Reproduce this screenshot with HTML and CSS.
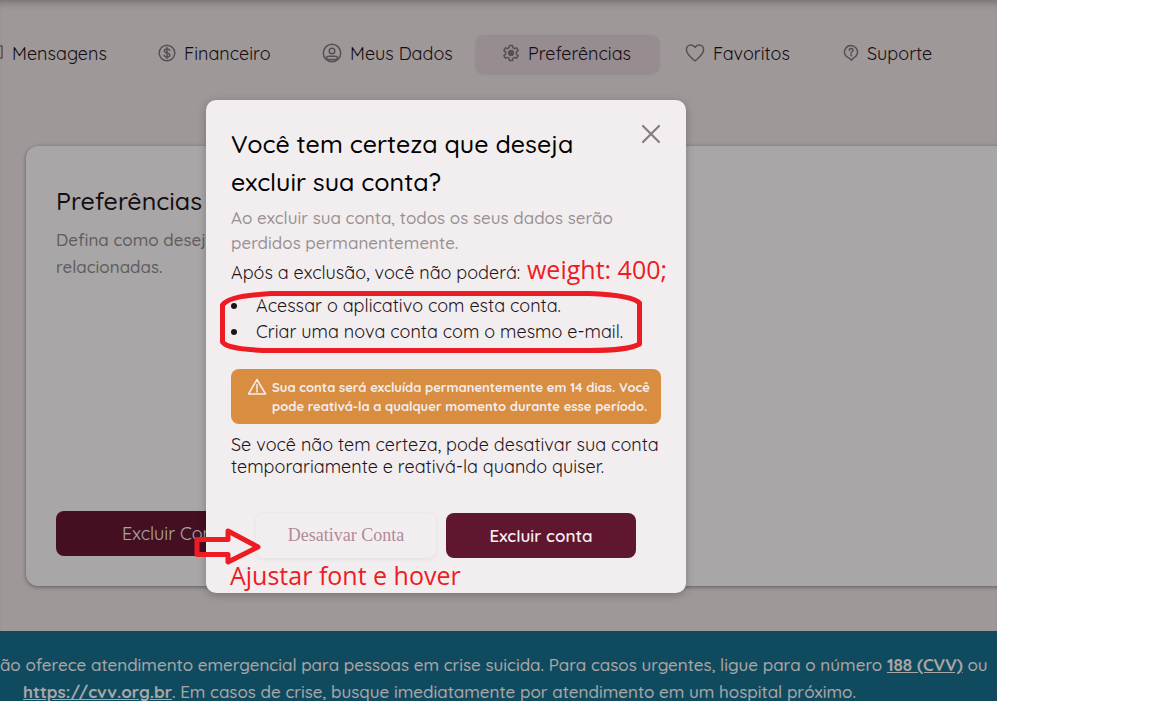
FILE: index.html
```
<!DOCTYPE html>
<html lang="pt-BR">

<head>
    <meta charset="UTF-8">
    <meta name="viewport" content="width=device-width, initial-scale=1.0">
    <title>Preferências</title>
    <link rel="stylesheet" href="styles.css">
</head>

<body>
    <div class="page">
        <nav class="menu">
            <a class="menu-item" href="#">
                <svg width="20" height="20" viewBox="0 0 20 20"><path d="M2 3h16v12H8l-4 3v-3H2z"/></svg>
                Mensagens
            </a>
            <a class="menu-item" href="#">
                <svg width="18" height="18" viewBox="0 0 18 18"><circle cx="9" cy="9" r="7.8"/><path d="M11.8 6.6C11.500 5.300 10.400 4.900 9 4.900c-1.600 0-2.700.7-2.700 1.900 0 2.900 5.600 1.400 5.600 4.300 0 1.300-1.200 2-2.900 2-1.600 0-2.700-.6-3-1.900M9 3.400v11.200"/></svg>
                Financeiro
            </a>
            <a class="menu-item" href="#">
                <svg width="20" height="20" viewBox="0 0 20 20"><circle cx="10" cy="10" r="8.700"/><circle cx="10" cy="8" r="2.800"/><path d="M4.500 16.500v-1c0-1.500 1-2.200 2.300-2.200h6.400c1.300 0 2.300.7 2.300 2.200v1M5 16.500h10"/></svg>
                Meus Dados
            </a>
            <a class="menu-item active" href="#">
                <svg width="18" height="18" viewBox="0 0 18 18"><path d="M7.500 1.500h3l.4 2.200 1.600.9 2.100-.8 1.500 2.600-1.700 1.500v2.200l1.700 1.500-1.500 2.600-2.100-.8-1.600.9-.4 2.200h-3l-.4-2.200-1.600-.9-2.100.8-1.500-2.600 1.700-1.500V7.900L1.900 6.400l1.500-2.600 2.100.8 1.600-.9z"/><circle class="fill" cx="9" cy="9" r="2.400"/></svg>
                Preferências
            </a>
            <a class="menu-item" href="#">
                <svg width="20" height="20" viewBox="0 0 20 20"><path d="M10 18C6 14.500 1.400 11 1.400 6.700 1.400 4 3.300 2 5.700 2 7.700 2 9.200 3 10 4.400 10.800 3 12.300 2 14.300 2c2.400 0 4.300 2 4.300 4.700C18.600 11 14 14.500 10 18z"/></svg>
                Favoritos
            </a>
            <a class="menu-item" href="#">
                <svg width="16" height="18" viewBox="0 0 16 18"><path d="M6.300 14.300A6.500 6.500 0 1 1 10 14.200L8.500 16.200z"/><path d="M6.200 6.300c0-1.100.8-1.800 1.900-1.800s1.900.7 1.900 1.700c0 1.300-1.900 1.400-1.900 2.900M8.100 10.500v1.200"/></svg>
                Suporte
            </a>
        </nav>

        <main class="card">
            <h1 class="card-title">Preferências</h1>
            <p class="card-text">Defina como deseja<br>relacionadas.</p>
            <button class="btn btn-card" type="button">Excluir Conta</button>
        </main>

        <footer class="footer">
            <p>não oferece atendimento emergencial para pessoas em crise suicida. Para casos urgentes, ligue para o número <a href="tel:188">188 (CVV)</a> ou<br><a href="https://cvv.org.br">https://cvv.org.br</a>. Em casos de crise, busque imediatamente por atendimento em um hospital próximo.</p>
        </footer>

        <!-- modal de exclusão -->
        <div class="overlay">
            <div class="modal" role="dialog" aria-modal="true" aria-labelledby="modal-title">
                <button class="close" type="button" aria-label="Fechar">
                    <svg width="20" height="20" viewBox="0 0 20 20"><path d="M2 2l16 16M18 2L2 18"/></svg>
                </button>
                <h2 class="modal-title" id="modal-title">Você tem certeza que deseja<br>excluir sua conta?</h2>
                <p class="modal-desc">Ao excluir sua conta, todos os seus dados serão<br>perdidos permanentemente.</p>
                <p class="modal-text">Após a exclusão, você não poderá:</p>
                <ul class="modal-list">
                    <li>Acessar o aplicativo com esta conta.</li>
                    <li>Criar uma nova conta com o mesmo e-mail.</li>
                </ul>
                <div class="alert">
                    <svg width="20" height="18" viewBox="0 0 20 18"><path d="M10 1.500L18.500 16H1.500zM10 6.500v4.500M10 12.300v1.700"/></svg>
                    <p>Sua conta será excluída permanentemente em 14 dias. Você<br>pode reativá-la a qualquer momento durante esse período.</p>
                </div>
                <p class="modal-hint">Se você não tem certeza, pode desativar sua conta<br>temporariamente e reativá-la quando quiser.</p>
                <div class="modal-actions">
                    <button class="btn btn-outline" type="button">Desativar Conta</button>
                    <button class="btn btn-primary" type="button">Excluir conta</button>
                </div>
            </div>
        </div>

        <!-- anotações -->
        <span class="note note-weight">weight: 400;</span>
        <span class="note note-hover">Ajustar font e hover</span>
        <svg class="mark mark-list" width="424" height="66" viewBox="0 0 424 66"><path d="M52 5.500H370C395 6.500 415 9 420.500 15V56C412 61 392 62.500 370 62.500H44C24 61.500 8 60 3.500 54V17C10 8.500 30 7 52 5.500z"/></svg>
        <svg class="mark mark-arrow" width="68" height="38" viewBox="0 0 68 38"><path d="M3 11.500H34V3L64 19 34 34V26.500H3z"/></svg>
    </div>
</body>

</html>
```
FILE: styles.css
```
* {
    margin: 0;
    padding: 0;
    box-sizing: border-box;
}

body {
    padding-right: 155px;
    background: #fff;
    font-family: Quicksand, Lato, sans-serif;
    font-size: 18px;
    color: #1e1319;
}

svg {
    flex: none;
    fill: none;
    stroke: currentColor;
    stroke-width: 1.5;
    stroke-linejoin: round;
    stroke-linecap: round;
}

.page {
    position: relative;
    display: flex;
    flex-direction: column;
    min-height: 100vh;
    overflow: hidden;
    background: #e4dadc;
    box-shadow: inset 0 8px 8px -6px rgba(0, 0, 0, .3);
}
/* menu */

.menu {
    display: grid;
    grid-template-columns: 148px 164px 180px 183px 158px 145px;
    margin: 35px 0 0 -16px;
}

.menu-item {
    display: flex;
    align-items: center;
    gap: 8px;
    height: 38px;
    padding-bottom: 2px;
    color: #1e1319;
    text-decoration: none;
    white-space: nowrap;
}

.menu-item svg {
    color: #7c7278;
}

.menu-item .fill {
    fill: currentColor;
}

.menu-item:nth-child(n+2) {
    padding-left: 26px;
}

.menu-item.active {
    border-radius: 8px;
    background: #d8c9cf;
    box-shadow: 0 1px 3px rgba(0, 0, 0, .12);
}
/* card */

.card {
    display: flex;
    flex-direction: column;
    align-items: flex-start;
    height: 440px;
    margin: 73px -20px 45px 26px;
    padding: 36px 30px 30px;
    border-radius: 12px;
    background: #f2eeef;
    box-shadow: 0 1px 4px rgba(0, 0, 0, .4);
}

.card-title {
    font-size: 25px;
    font-weight: 500;
    line-height: 38px;
}

.card-text {
    margin-top: 6px;
    font-size: 17px;
    font-weight: 500;
    line-height: 27px;
    color: #8c8488;
}

.btn {
    height: 45px;
    border: 0;
    border-radius: 8px;
    background: #611630;
    color: #f2eeef;
    font-family: inherit;
    font-size: 18px;
    cursor: pointer;
}

.btn-card {
    width: 240px;
    margin-top: auto;
}
/* rodapé */

.footer {
    flex: 1;
    padding: 20px 0 0 23px;
    background: #176b88;
    color: #f2eeef;
}

.footer p {
    font-size: 17px;
    font-weight: 500;
    line-height: 27px;
    text-indent: -33px;
    white-space: nowrap;
}

.footer a {
    color: inherit;
    font-weight: 700;
}
/* modal */

.overlay {
    position: absolute;
    top: 0;
    right: 0;
    bottom: 0;
    left: -105px;
    display: flex;
    justify-content: center;
    align-items: flex-start;
    padding-top: 100px;
    background: rgba(0, 0, 0, .3);
}

.modal {
    position: relative;
    width: 480px;
    padding: 25px 25px 35px;
    border-radius: 10px;
    background: #f2eeef;
    box-shadow: 0 2px 8px rgba(0, 0, 0, .25);
}

.close {
    position: absolute;
    top: 24px;
    right: 25px;
    width: 20px;
    height: 20px;
    border: 0;
    background: none;
    color: #857c80;
    cursor: pointer;
}

.close svg {
    display: block;
    stroke-width: 2.2;
}

.modal-title {
    color: #000;
    font-size: 25px;
    font-weight: 500;
    line-height: 38px;
}

.modal-desc {
    margin-top: 4px;
    font-size: 17px;
    font-weight: 500;
    line-height: 25px;
    color: #999194;
}

.modal-text {
    margin-top: 6px;
    line-height: 24px;
}

.modal-list {
    margin-top: 8px;
    line-height: 26px;
    list-style-position: inside;
}

.alert {
    display: flex;
    gap: 5px;
    margin-top: 24px;
    padding: 9px 16px 8px;
    border-radius: 8px;
    background: #d88d41;
    color: #f2eeef;
}

.alert p {
    font-size: 13px;
    font-weight: 700;
    line-height: 19px;
    white-space: nowrap;
}

.modal-hint {
    margin-top: 10px;
    line-height: 22px;
}

.modal-actions {
    display: flex;
    justify-content: center;
    gap: 10px;
    margin-top: 35px;
}

.btn-outline {
    width: 180px;
    background: #f2eeef;
    box-shadow: 0 1px 4px rgba(0, 0, 0, .07);
    color: #b08a98;
    font-family: "Liberation Serif", serif;
}

.btn-primary {
    width: 190px;
    font-size: 17px;
    font-weight: 600;
}
/* anotações */

.note {
    position: absolute;
    color: #ed1c24;
    font-family: "Segoe UI", "Open Sans", sans-serif;
    font-size: 25px;
    line-height: 34px;
    white-space: nowrap;
}

.note-weight {
    top: 252px;
    left: 527px;
}

.note-hover {
    top: 558px;
    left: 230px;
}

.mark {
    position: absolute;
    color: #ed1c24;
    stroke-width: 5;
}

.mark-list {
    top: 288px;
    left: 219px;
}

.mark-arrow {
    top: 528px;
    left: 194px;
}
```
